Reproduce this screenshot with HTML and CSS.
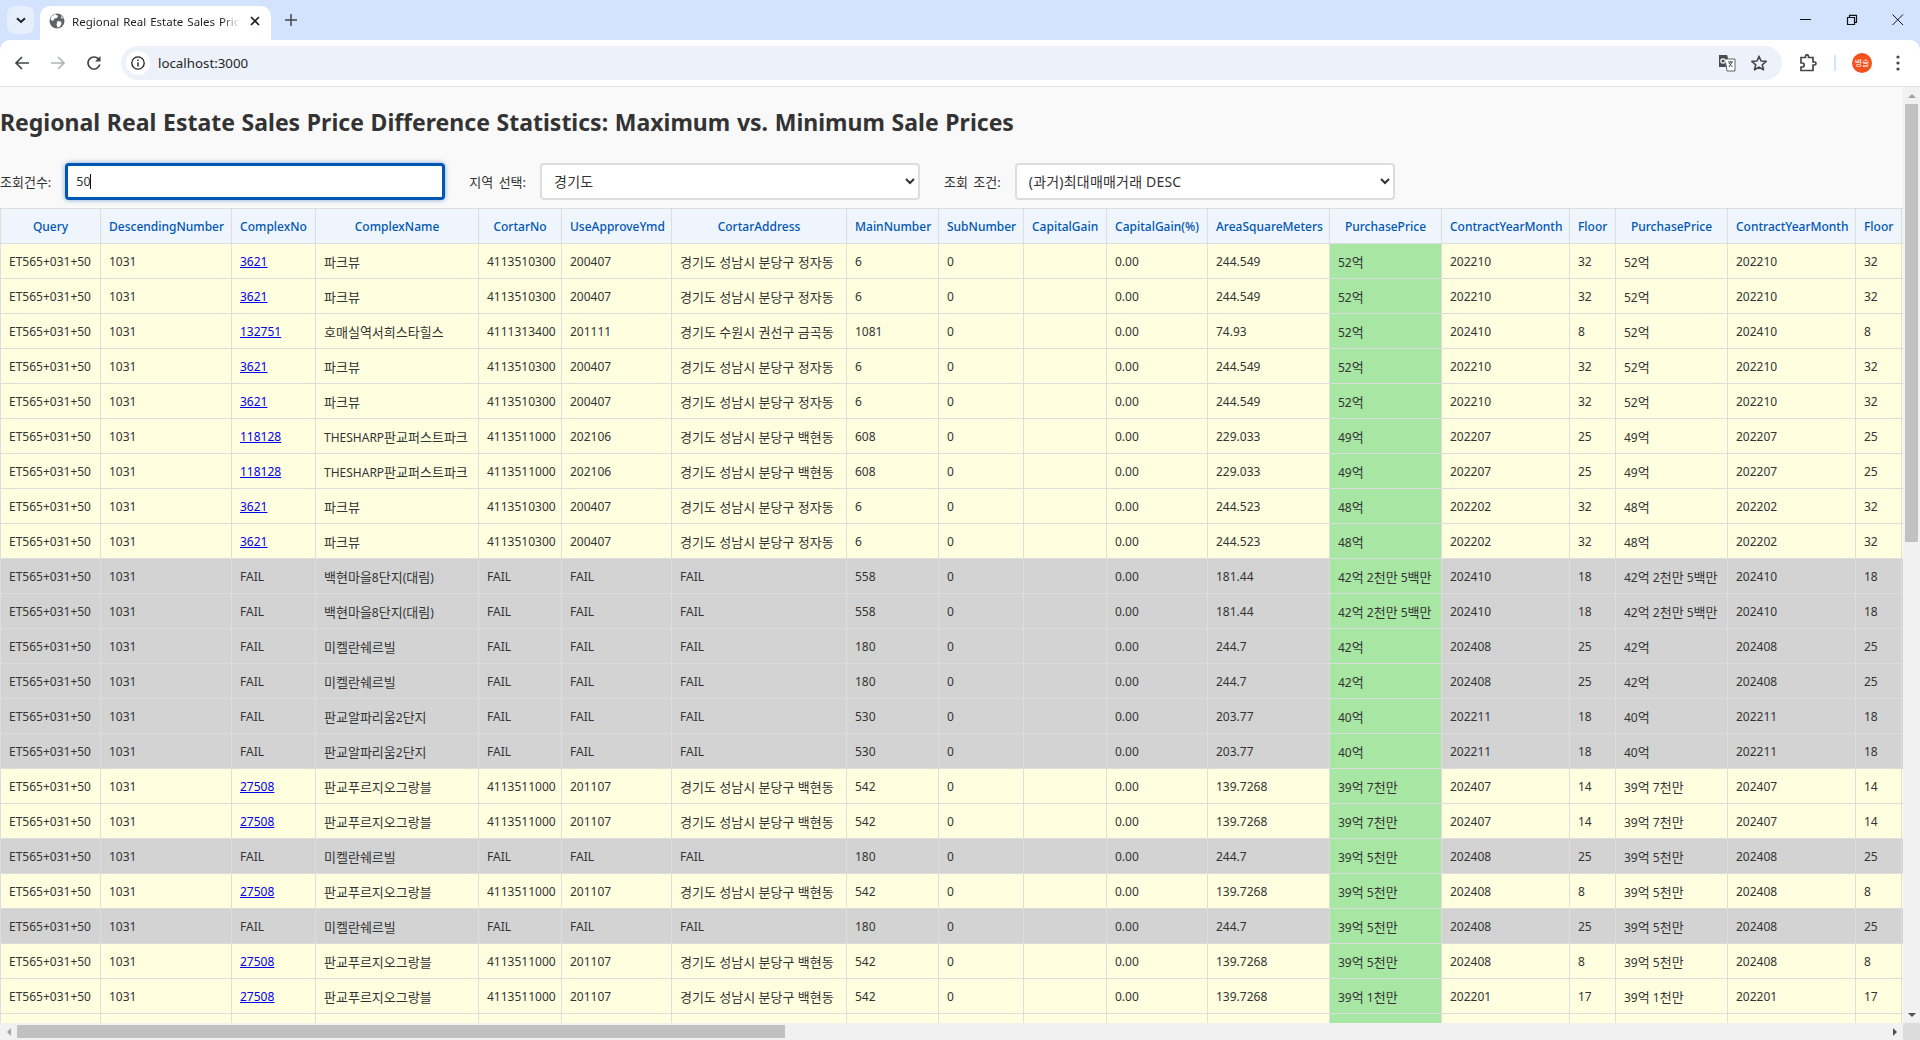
FILE: index.html
```html
<!DOCTYPE html>
<html lang="ko">
<head>
<meta charset="utf-8">
<title>Regional Real Estate Sales Price Difference Statistics</title>
<link rel="stylesheet" href="styles.css">
</head>
<body>
<div class="browser">
  <div class="tabstrip">
    <div class="tab-search"><svg width="16" height="16" viewBox="0 0 16 16"><path d="M4 6.200 8 10l4-3.800" fill="none" stroke="#1f1f1f" stroke-width="1.900"/></svg></div>
    <div class="tab">
      <svg class="favicon" width="16" height="16" viewBox="0 0 16 16"><circle cx="8" cy="8" r="7.500" fill="#5f6368"/><path d="M6 1 9 3 8 5 5.500 5.500 4 8 1.500 6.500 2.500 3.500ZM8.500 8 12 8.500 12.500 11 10.500 14 8.500 14.500 7.500 11.500ZM12 2.500 14.500 5.500 12.500 5.500Z" fill="#fff"/></svg>
      <span class="tab-title">Regional Real Estate Sales Price Difference Statistics</span>
      <svg class="tab-close" width="16" height="16" viewBox="0 0 16 16"><path d="M4 4l8 8M12 4l-8 8" stroke="#1f1f1f" stroke-width="1.700"/></svg>
    </div>
    <svg class="new-tab" width="16" height="16" viewBox="0 0 16 16"><path d="M8 2v12M2 8h12" stroke="#444746" stroke-width="1.500"/></svg>
    <div class="window-controls">
      <svg width="16" height="16" viewBox="0 0 16 16"><path d="M2 7.500h11" stroke="#111" stroke-width="1"/></svg>
      <svg width="16" height="16" viewBox="0 0 16 16"><path d="M3.500 5.500h7v7h-7zM5.500 5.500v-2.200h7v7h-2" fill="none" stroke="#111" stroke-width="1.200"/></svg>
      <svg width="16" height="16" viewBox="0 0 16 16"><path d="M2.500 2.500l10.500 10.500M13 2.500 2.500 13" stroke="#111" stroke-width="1"/></svg>
    </div>
  </div>
  <div class="toolbar">
    <div class="nav">
      <svg width="18" height="18" viewBox="0 0 18 18"><path d="M16 9H3M9 3 3 9l6 6" fill="none" stroke="#444746" stroke-width="1.700"/></svg>
      <svg width="18" height="18" viewBox="0 0 18 18"><path d="M2 9h13M9 3l6 6-6 6" fill="none" stroke="#b1b3b5" stroke-width="1.700"/></svg>
      <svg width="18" height="18" viewBox="0 0 18 18"><path d="M14.800 10.500A6 6 0 1 1 13.300 4.800L15 6.500" fill="none" stroke="#444746" stroke-width="1.700"/><path d="M15.500 2v5.500H10z" fill="#444746"/></svg>
    </div>
    <div class="omnibox">
      <div class="site-info"><svg width="16" height="16" viewBox="0 0 16 16"><circle cx="8" cy="8" r="6.200" fill="none" stroke="#1f1f1f" stroke-width="1.300"/><path d="M8 7.200v4.200M8 4.500v1.500" stroke="#1f1f1f" stroke-width="1.400"/></svg></div>
      <span class="url">localhost:3000</span>
      <svg class="translate" width="18" height="18" viewBox="0 0 18 18"><path d="M1 1h8l1 3v9H1z" fill="#4a4d50"/><path d="M7 5h10v12H9z" fill="#fff" stroke="#5f6368"/><circle cx="5" cy="7" r="2.200" fill="none" stroke="#fff" stroke-width="1.200"/><path d="M10 8h5M12.500 7v1M14 8l-3 5M11 9l3.500 4" stroke="#444" fill="none"/></svg>
      <svg class="star" width="18" height="18" viewBox="0 0 18 18"><path d="M9 2.200 11 7l5.200.4-4 3.400 1.300 5L9 13.100 4.500 15.800l1.300-5-4-3.400L7 7z" fill="none" stroke="#444746" stroke-width="1.600" stroke-linejoin="round"/></svg>
    </div>
    <svg class="extensions" width="18" height="18" viewBox="0 0 18 18"><path d="M2 3h4.500V1.800a1.500 1.500 0 0 1 3 0V3H14v4.500h1.500a1.500 1.500 0 0 1 0 3H14V16H2v-3.500h1.200a2 2 0 0 0 0-4H2z" fill="none" stroke="#444746" stroke-width="1.700" transform="translate(0 .5)"/></svg>
    <div class="divider"></div>
    <div class="avatar">병술</div>
    <svg class="menu" width="16" height="18" viewBox="0 0 16 18"><circle cx="8" cy="3" r="1.600" fill="#444746"/><circle cx="8" cy="9" r="1.600" fill="#444746"/><circle cx="8" cy="15" r="1.600" fill="#444746"/></svg>
  </div>
  <main class="viewport">
    <div class="page">
      <h1 class="title">Regional Real Estate Sales Price Difference Statistics: Maximum vs. Minimum Sale Prices</h1>
      <form class="filters">
        <label class="filter"><span>조회건수:</span><span class="input-wrap"><input class="control focused" type="text" value="50"><span class="caret"></span></span></label>
        <label class="filter"><span>지역 선택:</span><select class="control"><option>경기도</option></select></label>
        <label class="filter"><span>조회 조건:</span><select class="control"><option>(과거)최대매매거래 DESC</option></select></label>
      </form>
      <table class="stats">
        <colgroup><col><col><col><col><col><col><col><col><col><col><col><col><col><col><col><col><col><col><col></colgroup>
        <thead>
          <tr><th>Query</th><th>DescendingNumber</th><th>ComplexNo</th><th>ComplexName</th><th>CortarNo</th><th>UseApproveYmd</th><th>CortarAddress</th><th>MainNumber</th><th>SubNumber</th><th>CapitalGain</th><th>CapitalGain(%)</th><th>AreaSquareMeters</th><th>PurchasePrice</th><th>ContractYearMonth</th><th>Floor</th><th>PurchasePrice</th><th>ContractYearMonth</th><th>Floor</th><th></th></tr>
        </thead>
        <tbody id="rows"></tbody>
      </table>
    </div>
    <div class="vbar">
      <span class="arrow up"></span>
      <span class="vthumb"></span>
      <span class="arrow down"></span>
    </div>
    <div class="hbar">
      <span class="arrow left"></span>
      <span class="hthumb"></span>
      <span class="arrow right"></span>
    </div>
    <div class="corner"></div>
  </main>
</div>
<script src="script.js"></script>
</body>
</html>
```
FILE: styles.css
```css
* { box-sizing: border-box; }
html, body { margin: 0; height: 100%; overflow: hidden; }
body { font-family: "Noto Sans", "Noto Sans CJK KR", sans-serif; color: #333; }
.browser { display: flex; flex-direction: column; height: 1040px; background: #d3e3fd; }

.tabstrip { flex: 0 0 40px; display: flex; align-items: flex-start; padding: 6px 0 0 7px; }
.tab-search { width: 27px; height: 28px; border-radius: 8px; background: #e6eefc; display: flex; align-items: center; justify-content: center; }
.tab { width: 231px; height: 34px; margin-left: 6px; background: #fff; border-radius: 10px 10px 0 0; display: flex; align-items: center; padding: 0 0 0 9px; }
.favicon { flex: none; margin-top: -4px; }
.tab-title { margin-left: 7px; width: 168px; font-size: 11.500px; word-spacing: 1px; white-space: nowrap; overflow: hidden; color: #1f1f1f; margin-top: -3px; -webkit-mask-image: linear-gradient(90deg, #000 150px, transparent 168px); mask-image: linear-gradient(90deg, #000 150px, transparent 168px); }
.tab-close { flex: none; margin: -4px 0 0 7px; }
.new-tab { margin: 6px 0 0 12px; }
.window-controls { margin-left: auto; display: flex; gap: 30px; padding: 6px 14px 0 0; }

.toolbar { flex: 0 0 47px; display: flex; align-items: center; background: #fff; border-radius: 10px 10px 0 0; border-bottom: 1px solid #dfe1e5; padding-left: 13px; }
.nav { display: flex; gap: 18px; }
.omnibox { width: 1661px; height: 34px; margin-left: 18px; background: #edf2fa; border-radius: 17px; display: flex; align-items: center; padding: 0 0 0 5px; }
.site-info { width: 24px; height: 24px; border-radius: 50%; background: #fff; display: flex; align-items: center; justify-content: center; }
.url { margin-left: 8px; font-size: 13.300px; color: #1f1f1f; }
.translate { margin-left: auto; }
.star { margin: 0 14px 0 14px; }
.extensions { margin-left: 17px; }
.divider { width: 2px; height: 16px; background: #d3e3fd; margin-left: 17px; }
.avatar { width: 20px; height: 20px; margin-left: 16px; border-radius: 50%; background: #f4511e; color: #fff; font-size: 8px; line-height: 20px; text-align: center; white-space: nowrap; }
.menu { margin-left: 18px; }

.viewport { flex: 1; min-height: 0; display: grid; grid-template: minmax(0, 1fr) 17px / minmax(0, 1fr) 17px; background: #f9f9f9; }
.page { overflow: hidden; }
.vbar { display: flex; flex-direction: column; align-items: center; background: #f1f1f1; }
.hbar { display: flex; align-items: center; background: #f1f1f1; }
.vthumb { width: 13px; height: 438px; background: #c1c1c1; }
.hthumb { width: 768px; height: 13px; background: #c1c1c1; }
.corner { background: #dcdcdc; }
.arrow { flex: none; width: 17px; height: 17px; display: flex; align-items: center; justify-content: center; }
.arrow::before { content: ""; width: 0; height: 0; border: 4px solid transparent; }
.arrow.up::before { border-bottom-color: #a3a3a3; border-top-width: 0; }
.arrow.down { margin-top: auto; }
.arrow.down::before { border-top-color: #505050; border-bottom-width: 0; }
.arrow.left::before { border-right-color: #a3a3a3; border-left-width: 0; }
.arrow.right { margin-left: auto; }
.arrow.right::before { border-left-color: #505050; border-right-width: 0; }

.title { margin: 19px 0 0; height: 33px; line-height: 33px; font-size: 23px; word-spacing: .7px; font-weight: 700; color: #333; white-space: nowrap; }
.filters { display: flex; gap: 24px; margin-top: 24px; }
.filter { display: flex; align-items: center; gap: 14px; font-size: 13px; word-spacing: 2px; }
.control { display: block; width: 380px; height: 37px; border: 2px solid #ddd; border-radius: 4px; background: #fff; padding: 0 8px; font: 14px "Noto Sans", "Noto Sans CJK KR", sans-serif; letter-spacing: .2px; color: #333; }
.focused { border: 3px solid #0056b3; outline: none; font-size: 12.500px; letter-spacing: 0; box-shadow: 0 0 5px rgba(0, 86, 179, .5); }
.input-wrap { position: relative; display: block; }
.caret { position: absolute; left: 25px; top: 11px; width: 1px; height: 15px; background: #111; }

.stats { margin-top: 8px; width: 4631px; table-layout: fixed; border-collapse: collapse; font-size: 12px; }
.stats col:nth-child(1) { width: 100px; }
.stats col:nth-child(2) { width: 131px; }
.stats col:nth-child(3) { width: 84px; }
.stats col:nth-child(4) { width: 163px; }
.stats col:nth-child(5) { width: 83px; }
.stats col:nth-child(6) { width: 110px; }
.stats col:nth-child(7) { width: 175px; }
.stats col:nth-child(8) { width: 92px; }
.stats col:nth-child(9) { width: 85px; }
.stats col:nth-child(10) { width: 83px; }
.stats col:nth-child(11) { width: 101px; }
.stats col:nth-child(12) { width: 122px; }
.stats col:nth-child(13) { width: 112px; }
.stats col:nth-child(14) { width: 128px; }
.stats col:nth-child(15) { width: 46px; }
.stats col:nth-child(16) { width: 112px; }
.stats col:nth-child(17) { width: 128px; }
.stats col:nth-child(18) { width: 46px; }
.stats th, .stats td { height: 35px; padding: 0 8px; border: 1px solid #ddd; white-space: nowrap; }
.stats th { background: #eef5fd; color: #0056b3; font-weight: 500; text-align: center; }
.stats td { text-align: left; }
.stats a { color: #0000ee; }
.ko { font-size: 13px; }
.row-ok { background: #ffffe0; }
.row-fail { background: #d3d3d3; }
.stats td.price { background: #a8e6a3; }
```
FILE: script.js
```js
var rows = [
  ["3621", "파크뷰", "4113510300", "200407", "경기도 성남시 분당구 정자동", "6", "244.549", "52억", "202210", "32", 2],
  ["132751", "호매실역서희스타힐스", "4111313400", "201111", "경기도 수원시 권선구 금곡동", "1081", "74.93", "52억", "202410", "8", 1],
  ["3621", "파크뷰", "4113510300", "200407", "경기도 성남시 분당구 정자동", "6", "244.549", "52억", "202210", "32", 2],
  ["118128", "THESHARP판교퍼스트파크", "4113511000", "202106", "경기도 성남시 분당구 백현동", "608", "229.033", "49억", "202207", "25", 2],
  ["3621", "파크뷰", "4113510300", "200407", "경기도 성남시 분당구 정자동", "6", "244.523", "48억", "202202", "32", 2],
  ["FAIL", "백현마을8단지(대림)", "FAIL", "FAIL", "FAIL", "558", "181.44", "42억 2천만 5백만", "202410", "18", 2],
  ["FAIL", "미켈란쉐르빌", "FAIL", "FAIL", "FAIL", "180", "244.7", "42억", "202408", "25", 2],
  ["FAIL", "판교알파리움2단지", "FAIL", "FAIL", "FAIL", "530", "203.77", "40억", "202211", "18", 2],
  ["27508", "판교푸르지오그랑블", "4113511000", "201107", "경기도 성남시 분당구 백현동", "542", "139.7268", "39억 7천만", "202407", "14", 2],
  ["FAIL", "미켈란쉐르빌", "FAIL", "FAIL", "FAIL", "180", "244.7", "39억 5천만", "202408", "25", 1],
  ["27508", "판교푸르지오그랑블", "4113511000", "201107", "경기도 성남시 분당구 백현동", "542", "139.7268", "39억 5천만", "202408", "8", 1],
  ["FAIL", "미켈란쉐르빌", "FAIL", "FAIL", "FAIL", "180", "244.7", "39억 5천만", "202408", "25", 1],
  ["27508", "판교푸르지오그랑블", "4113511000", "201107", "경기도 성남시 분당구 백현동", "542", "139.7268", "39억 5천만", "202408", "8", 1],
  ["27508", "판교푸르지오그랑블", "4113511000", "201107", "경기도 성남시 분당구 백현동", "542", "139.7268", "39억 1천만", "202201", "17", 1]
];

var list = [];
rows.forEach(function (r) {
  for (var i = 0; i < r[10]; i++) list.push(r);
});
while (list.length < 50) list.push(rows[rows.length - 1]);

// Hangul runs are set a point larger than the Latin text around them.
function fill(parent, text) {
  text.split(/([\uAC00-\uD7A3 ]*[\uAC00-\uD7A3])/).forEach(function (run) {
    if (!run) return;
    if (/[\uAC00-\uD7A3]/.test(run)) {
      var span = document.createElement("span");
      span.className = "ko";
      span.textContent = run;
      parent.appendChild(span);
    } else {
      parent.appendChild(document.createTextNode(run));
    }
  });
}

var body = document.getElementById("rows");
list.forEach(function (r) {
  var tr = document.createElement("tr");
  var fail = r[0] === "FAIL";
  tr.className = fail ? "row-fail" : "row-ok";
  var cells = ["ET565+031+50", "1031", r[0], r[1], r[2], r[3], r[4], r[5], "0", "", "0.00", r[6], r[7], r[8], r[9], r[7], r[8], r[9], ""];
  cells.forEach(function (text, i) {
    var td = document.createElement("td");
    if (i === 2 && !fail) {
      var a = document.createElement("a");
      a.href = "#";
      a.textContent = text;
      td.appendChild(a);
    } else {
      fill(td, text);
    }
    if (i === 12) td.className = "price";
    tr.appendChild(td);
  });
  body.appendChild(tr);
});
```
